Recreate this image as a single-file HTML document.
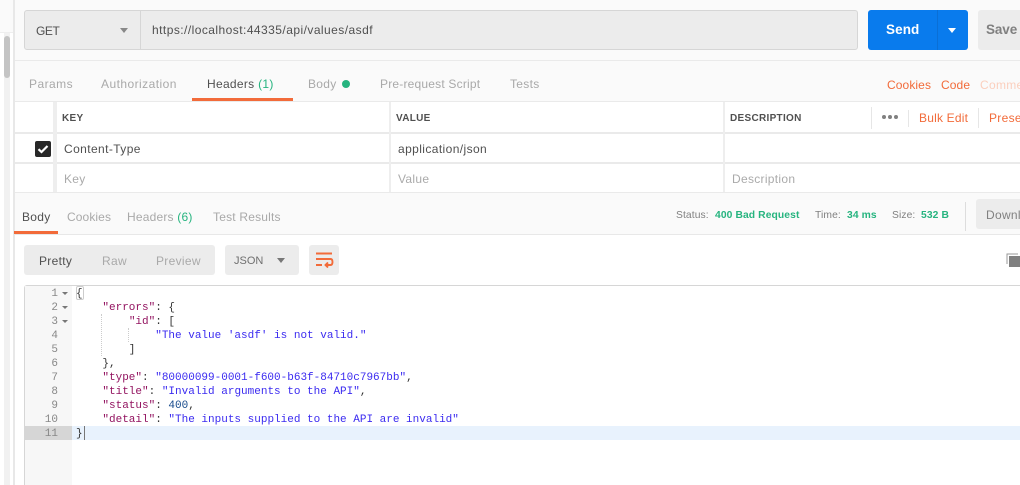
<!DOCTYPE html>
<html><head><meta charset="utf-8"><style>
html,body{margin:0;padding:0;width:1020px;height:485px;overflow:hidden;background:#fafafa}
body{position:relative;font-family:"Liberation Sans",sans-serif;font-size:12px;color:#808080}
.b,.t{position:absolute}
.t{white-space:nowrap;line-height:16px;letter-spacing:.3px}
.g{color:#26b47f}.o{color:#f26b3a}.d{color:#505050}.l{color:#a9a9a9}.p{color:#aaa}
.h{font-size:10px;font-weight:bold;color:#505050;letter-spacing:.3px}
.x{font-size:10.3px;letter-spacing:.1px}
.m{position:absolute;left:0;font-family:"Liberation Mono",monospace;font-size:11px;line-height:14px;white-space:pre;color:#333}
.n{position:absolute;left:25px;width:33px;text-align:right;font-family:"Liberation Mono",monospace;font-size:11px;line-height:14px;color:#888}
.k{color:#92125f}.s{color:#3b2bf0}.u{color:#164a8c}
.a{position:absolute;left:62px;width:0;height:0;border:3px solid transparent;border-top:3px solid #777;border-bottom:0}
</style></head><body>
<div class="b" style="left:0;top:0;width:13px;height:485px;background:#fff"></div>
<div class="b" style="left:0;top:0;width:13px;height:32px;background:#fafafa;border-bottom:1px solid #eee"></div>
<div class="b" style="left:4px;top:33px;width:6px;height:452px;background:#f1f1f1"></div>
<div class="b" style="left:4px;top:36px;width:6px;height:42px;background:#c4c4c4;border-radius:3px"></div>
<div class="b" style="left:13px;top:0;width:2px;height:485px;background:#e8e8e8"></div>

<div class="b" style="left:24px;top:10px;width:832px;height:38px;background:#ececec;border:1px solid #d6d6d6;border-radius:3px"></div>
<div class="b" style="left:140px;top:11px;width:1px;height:38px;background:#d6d6d6"></div>
<div class="t" style="left:36px;top:23px;font-size:12px;letter-spacing:-.4px;color:#505050">GET</div>
<div class="b" style="left:120px;top:28px;width:0;height:0;border:4.5px solid transparent;border-top:5px solid #888;border-bottom:0"></div>
<div class="t" style="left:152px;top:22px;color:#505050;letter-spacing:.45px">https://localhost:44335/api/values/asdf</div>

<div class="b" style="left:868px;top:10px;width:100px;height:40px;background:#097bed;border-radius:3px"></div>
<div class="b" style="left:937px;top:10px;width:1px;height:40px;background:#0a6fd6"></div>
<div class="t" style="left:886px;top:22px;color:#fff;font-weight:bold;font-size:13.5px;letter-spacing:.1px">Send</div>
<div class="b" style="left:948px;top:28px;width:0;height:0;border:4px solid transparent;border-top:5px solid #fff;border-bottom:0"></div>
<div class="b" style="left:978px;top:10px;width:42px;height:40px;background:#ececec;border-radius:3px 0 0 3px"></div>
<div class="t" style="left:986px;top:22px;color:#808080;font-weight:bold;font-size:13.5px;letter-spacing:-.1px">Save</div>

<div class="b" style="left:15px;top:60px;width:1005px;height:1px;background:#eaeaea"></div>

<div class="t l" style="left:29px;top:76px;letter-spacing:.45px">Params</div>
<div class="t l" style="left:101px;top:76px;letter-spacing:.45px">Authorization</div>
<div class="t d" style="left:207px;top:76px">Headers <span class="g">(1)</span></div>
<div class="b" style="left:192px;top:98px;width:101px;height:3px;background:#f26b3a"></div>
<div class="t l" style="left:308px;top:76px">Body</div>
<div class="b" style="left:342px;top:80px;width:8px;height:8px;border-radius:50%;background:#26b47f"></div>
<div class="t l" style="left:380px;top:76px;letter-spacing:.2px">Pre-request Script</div>
<div class="t l" style="left:510px;top:76px">Tests</div>
<div class="t o" style="left:887px;top:77px;letter-spacing:.1px">Cookies</div>
<div class="t o" style="left:941px;top:77px;letter-spacing:.1px">Code</div>
<div class="t" style="left:980px;top:77px;color:#fbcfbd">Comme</div>

<div class="b" style="left:15px;top:101px;width:1005px;height:92px;background:#fff"></div>
<div class="b" style="left:15px;top:101px;width:1005px;height:1px;background:#eaeaea"></div>
<div class="b" style="left:15px;top:132px;width:1005px;height:2px;background:#eaeaea"></div>
<div class="b" style="left:15px;top:162px;width:1005px;height:2px;background:#eaeaea"></div>
<div class="b" style="left:15px;top:192px;width:1005px;height:1px;background:#eaeaea"></div>
<div class="b" style="left:53px;top:102px;width:4px;height:90px;background:#eee"></div>
<div class="b" style="left:389px;top:102px;width:2px;height:90px;background:#eee"></div>
<div class="b" style="left:723px;top:102px;width:2px;height:90px;background:#eee"></div>

<div class="t h" style="left:62px;top:111px">KEY</div>
<div class="t h" style="left:396px;top:111px">VALUE</div>
<div class="t h" style="left:730px;top:111px">DESCRIPTION</div>
<div class="b" style="left:871px;top:107px;width:1px;height:22px;background:#e6e6e6"></div>
<div class="b" style="left:908px;top:110px;width:1px;height:17px;background:#e6e6e6"></div>
<div class="b" style="left:978px;top:108px;width:1px;height:20px;background:#e6e6e6"></div>
<div class="b" style="left:882px;top:115px;width:4px;height:4px;border-radius:50%;background:#808080"></div>
<div class="b" style="left:888px;top:115px;width:4px;height:4px;border-radius:50%;background:#808080"></div>
<div class="b" style="left:894px;top:115px;width:4px;height:4px;border-radius:50%;background:#808080"></div>
<div class="t o" style="left:919px;top:110px;letter-spacing:.2px">Bulk Edit</div>
<div class="t o" style="left:989px;top:110px">Prese</div>

<div class="b" style="left:35px;top:141px;width:16px;height:16px;background:#282828;border-radius:2px"></div>
<svg class="b" style="left:35px;top:141px" width="16" height="16" viewBox="0 0 16 16"><path d="M3.5 8.2 6.5 11 12.5 5" fill="none" stroke="#fff" stroke-width="2.2"/></svg>
<div class="t d" style="left:64px;top:141px;letter-spacing:.4px">Content-Type</div>
<div class="t d" style="left:398px;top:141px;letter-spacing:.4px">application/json</div>
<div class="t p" style="left:64px;top:171px">Key</div>
<div class="t p" style="left:398px;top:171px">Value</div>
<div class="t p" style="left:732px;top:171px">Description</div>

<div class="t d" style="left:22px;top:209px">Body</div>
<div class="t l" style="left:67px;top:209px;letter-spacing:.1px">Cookies</div>
<div class="t l" style="left:127px;top:209px;letter-spacing:.2px">Headers <span class="g">(6)</span></div>
<div class="t l" style="left:213px;top:209px;letter-spacing:.2px">Test Results</div>
<div class="t x" style="left:676px;top:208px">Status:</div>
<div class="t g x" style="left:715px;top:208px;font-weight:bold">400 Bad Request</div>
<div class="t x" style="left:815px;top:208px">Time:</div>
<div class="t g x" style="left:847px;top:208px;font-weight:bold">34 ms</div>
<div class="t x" style="left:892px;top:208px">Size:</div>
<div class="t g x" style="left:921px;top:208px;font-weight:bold">532 B</div>
<div class="b" style="left:965px;top:202px;width:1px;height:29px;background:#ddd"></div>
<div class="b" style="left:976px;top:199px;width:44px;height:30px;background:#ececec;border-radius:3px 0 0 3px"></div>
<div class="t" style="left:986px;top:207px">Downl</div>

<div class="b" style="left:15px;top:234px;width:1005px;height:251px;background:#fff"></div>
<div class="b" style="left:15px;top:234px;width:1005px;height:1px;background:#e8e8e8"></div>
<div class="b" style="left:14px;top:231px;width:44px;height:3px;background:#f26b3a"></div>

<div class="b" style="left:24px;top:245px;width:191px;height:30px;background:#ececec;border-radius:3px"></div>
<div class="t d" style="left:39px;top:253px">Pretty</div>
<div class="t l" style="left:102px;top:253px">Raw</div>
<div class="t l" style="left:156px;top:253px">Preview</div>
<div class="b" style="left:225px;top:245px;width:74px;height:30px;background:#ececec;border-radius:3px"></div>
<div class="t" style="left:234px;top:253px;color:#707070;font-size:11px;letter-spacing:0">JSON</div>
<div class="b" style="left:277px;top:258px;width:0;height:0;border:4px solid transparent;border-top:5px solid #777;border-bottom:0"></div>
<div class="b" style="left:309px;top:245px;width:30px;height:30px;background:#ececec;border-radius:3px"></div>
<svg class="b" style="left:309px;top:245px" width="30" height="30" viewBox="0 0 30 30"><path d="M7 8.5H23M7 14H21.5Q23.5 14 23.5 17T21.5 20H17M19 17.5 16.5 20 19 22.5M7 20H13" fill="none" stroke="#f26b3a" stroke-width="1.9"/></svg>
<svg class="b" style="left:1006px;top:253px" width="14" height="14" viewBox="0 0 14 14"><path d="M1 11V1H12" fill="none" stroke="#999" stroke-width="1"/><rect x="3" y="3" width="11" height="11" fill="#808080"/></svg>

<div class="b" style="left:24px;top:285px;width:996px;height:200px;border-top:1px solid #d6d6d6;border-left:1px solid #d6d6d6;border-radius:3px 0 0 0;box-sizing:border-box"></div>
<div class="b" style="left:25px;top:286px;width:47px;height:199px;background:#f7f7f7"></div>
<div class="b" style="left:72px;top:426px;width:948px;height:14px;background:#e8f2fd"></div>
<div class="b" style="left:25px;top:426px;width:47px;height:14px;background:#d6d6d6"></div>
<div class="b" style="left:76px;top:286px;width:8px;height:14px;border:1px solid #ccc;border-radius:2px;box-sizing:border-box"></div>
<div class="b" style="left:84px;top:426px;width:1px;height:14px;background:#777"></div>
<div class="b" style="left:101px;top:314px;height:42px;border-left:1px dotted #ccc"></div>
<div class="b" style="left:128px;top:328px;height:14px;border-left:1px dotted #ccc"></div>

<div class="n" style="top:287px">1</div><div class="a" style="top:292px"></div>
<div class="n" style="top:301px">2</div><div class="a" style="top:306px"></div>
<div class="n" style="top:315px">3</div><div class="a" style="top:320px"></div>
<div class="n" style="top:329px">4</div>
<div class="n" style="top:343px">5</div>
<div class="n" style="top:357px">6</div>
<div class="n" style="top:371px">7</div>
<div class="n" style="top:385px">8</div>
<div class="n" style="top:399px">9</div>
<div class="n" style="top:413px">10</div>
<div class="n" style="top:427px">11</div>

<div class="b" style="left:76px;top:287px;width:940px;height:154px">
<div class="m" style="top:0">{</div>
<div class="m" style="top:14px">    <span class="k">"errors"</span>: {</div>
<div class="m" style="top:28px">        <span class="k">"id"</span>: [</div>
<div class="m" style="top:42px">            <span class="s">"The value 'asdf' is not valid."</span></div>
<div class="m" style="top:56px">        ]</div>
<div class="m" style="top:70px">    },</div>
<div class="m" style="top:84px">    <span class="k">"type"</span>: <span class="s">"80000099-0001-f600-b63f-84710c7967bb"</span>,</div>
<div class="m" style="top:98px">    <span class="k">"title"</span>: <span class="s">"Invalid arguments to the API"</span>,</div>
<div class="m" style="top:112px">    <span class="k">"status"</span>: <span class="u">400</span>,</div>
<div class="m" style="top:126px">    <span class="k">"detail"</span>: <span class="s">"The inputs supplied to the API are invalid"</span></div>
<div class="m" style="top:140px">}</div>
</div>
</body></html>
